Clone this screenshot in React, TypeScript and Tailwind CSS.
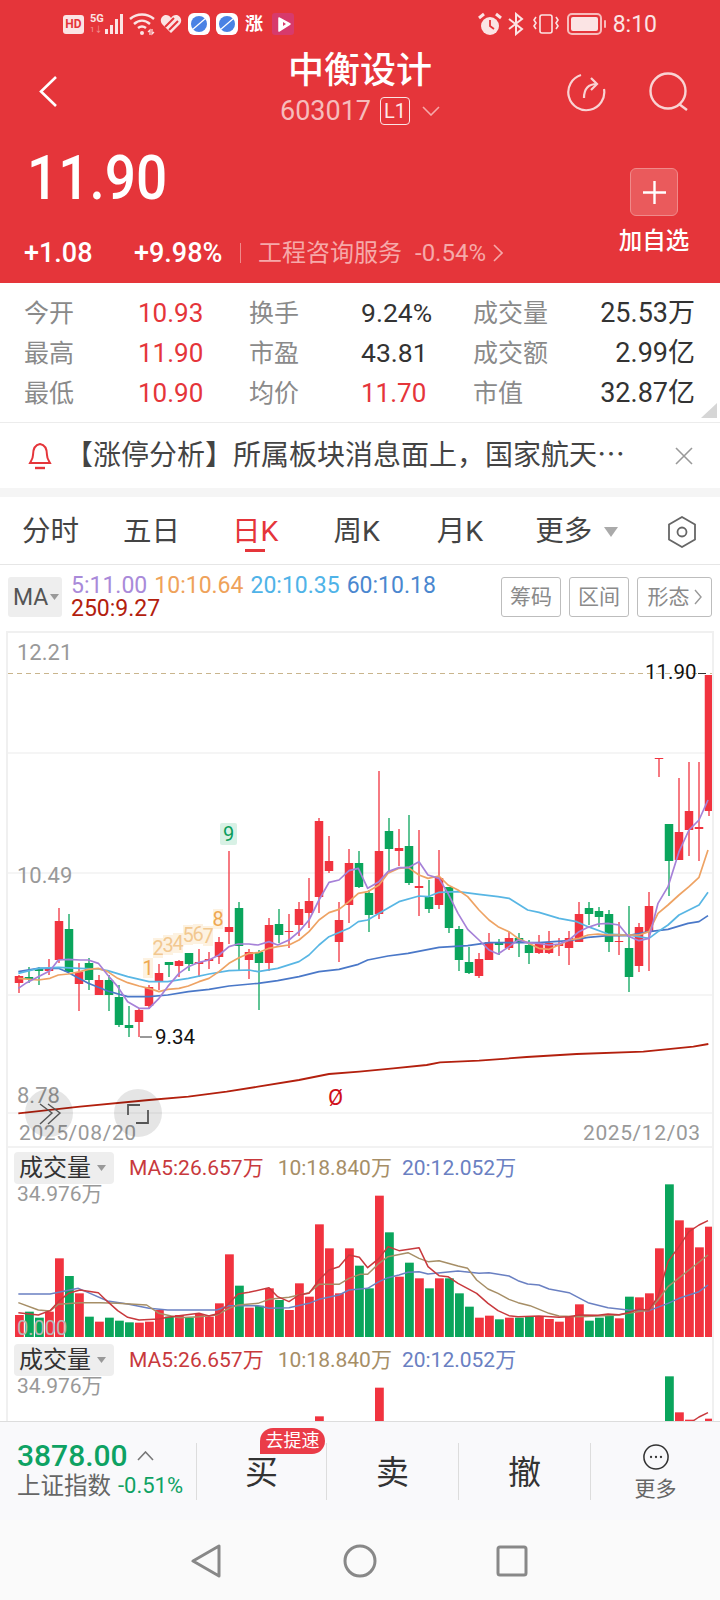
const UP = "#f1333f";
const DOWN = "#0aa55c";

type Pt = [number, number];

// [up, high, low, bodyTop, bodyBottom] in page pixels, one per day, x = 19 + 10 * i
const candles: [number, number, number, number, number][] = [
  [1, 975, 993, 976, 983], [0, 967, 983, 977, 979], [0, 967, 985, 969, 971], [1, 959, 975, 969, 971],
  [1, 908, 963, 921, 960], [0, 914, 972, 929, 972], [1, 963, 1011, 972, 984], [0, 958, 990, 963, 980],
  [1, 975, 995, 980, 995], [0, 975, 1011, 980, 995], [0, 985, 1027, 997, 1025], [0, 1006, 1037, 1025, 1028],
  [1, 1008, 1037, 1010, 1022], [1, 985, 1009, 987, 1006], [1, 964, 990, 973, 982], [0, 962, 977, 962, 965],
  [1, 960, 977, 961, 966], [0, 953, 971, 953, 964], [1, 949, 977, 962, 964], [1, 952, 969, 959, 961],
  [1, 937, 964, 942, 957], [1, 851, 944, 927, 932], [0, 902, 971, 908, 946], [1, 949, 979, 952, 960],
  [0, 950, 1010, 952, 963], [1, 918, 971, 925, 963], [0, 909, 943, 924, 935], [1, 914, 948, 931, 932],
  [1, 902, 936, 909, 925], [1, 878, 928, 901, 913], [1, 818, 913, 821, 897], [1, 836, 873, 861, 871],
  [1, 902, 962, 920, 942], [1, 849, 923, 863, 905], [0, 851, 888, 863, 887], [0, 890, 932, 893, 915],
  [1, 771, 919, 851, 914], [0, 818, 872, 831, 849], [1, 829, 866, 848, 851], [0, 815, 885, 846, 883],
  [1, 830, 916, 886, 888], [0, 880, 913, 897, 909], [1, 850, 909, 878, 905], [0, 887, 933, 887, 928],
  [0, 926, 971, 929, 960], [0, 947, 974, 962, 973], [1, 953, 978, 959, 976], [1, 933, 960, 942, 960],
  [0, 939, 955, 942, 945], [1, 932, 950, 938, 948], [0, 933, 957, 938, 943], [0, 940, 964, 945, 953],
  [1, 935, 954, 943, 953], [1, 931, 954, 943, 953], [1, 938, 956, 944, 946], [1, 931, 965, 938, 948],
  [1, 902, 942, 914, 942], [0, 902, 925, 908, 914], [0, 907, 927, 911, 917], [0, 910, 952, 914, 942],
  [1, 922, 955, 941, 942], [0, 906, 992, 948, 977], [1, 923, 972, 927, 966], [1, 892, 971, 906, 932],
  [1, 758, 777, 758, 759], [0, 824, 896, 824, 861], [1, 778, 860, 832, 860], [1, 762, 856, 811, 830],
  [1, 762, 861, 827, 829], [1, 675, 816, 675, 811],
];

// volume bar tops, y page pixels = 1140 + v / 3
const volumes = [
  525, 515, 533, 515, 355, 408, 460, 530, 545, 533, 542, 547, 548, 545, 510, 530, 525, 533, 522, 530,
  490, 343, 437, 503, 497, 445, 480, 510, 430, 470, 253, 325, 460, 325, 377, 445, 167, 277, 410, 368,
  415, 445, 415, 415, 460, 500, 533, 527, 538, 533, 533, 528, 528, 537, 545, 530, 493, 542, 533, 528,
  535, 470, 472, 460, 325, 133, 241, 263, 322, 260,
];

// line points traced in two halves: x / 3 (+360 for the right half)
const line = (left: Pt[], right: Pt[], top: number) =>
  [...left.map(([x, y]) => `${x / 3},${top + y / 3}`), ...right.map(([x, y]) => `${360 + x / 3},${top + y / 3}`)].join(" ");

const ma5 = line(
  [[55, 1075], [80, 1058], [115, 1040], [150, 1022], [175, 990], [205, 988], [240, 990], [265, 990], [295, 1000], [323, 1035], [353, 1070], [383, 1115], [417, 1135], [447, 1135], [477, 1105], [503, 1070], [537, 1030], [565, 1010], [597, 997], [627, 990], [657, 975], [687, 950], [714, 942], [747, 942], [774, 945], [807, 935], [833, 945], [867, 930], [897, 905], [927, 870], [957, 810], [987, 757], [1017, 750], [1047, 722], [1075, 715]],
  [[23, 775], [57, 755], [84, 725], [117, 713], [144, 713], [177, 695], [204, 735], [237, 745], [264, 790], [294, 850], [323, 898], [357, 930], [387, 960], [414, 972], [447, 950], [474, 930], [503, 938], [537, 940], [567, 945], [597, 942], [627, 930], [657, 905], [684, 892], [714, 882], [744, 880], [777, 885], [804, 918], [837, 932], [867, 925], [894, 820], [924, 770], [957, 665], [987, 600], [1017, 570], [1044, 510]],
  630
);
const ma10 = line(
  [[55, 1045], [115, 1050], [150, 1045], [175, 1035], [205, 1032], [240, 1025], [265, 1018], [295, 1015], [323, 1025], [353, 1045], [383, 1058], [417, 1068], [447, 1075], [477, 1085], [503, 1078], [537, 1075], [565, 1068], [597, 1055], [627, 1045], [657, 1025], [687, 1000], [714, 985], [747, 970], [774, 968], [807, 955], [833, 950], [867, 945], [897, 930], [927, 905], [957, 870], [987, 848], [1017, 838], [1047, 815], [1075, 790]],
  [[23, 785], [57, 765], [84, 730], [117, 715], [144, 712], [177, 735], [204, 745], [237, 738], [264, 765], [294, 780], [323, 800], [357, 840], [387, 870], [414, 890], [447, 905], [474, 925], [503, 938], [537, 955], [567, 958], [597, 945], [627, 930], [657, 925], [684, 915], [714, 912], [744, 915], [777, 915], [804, 915], [837, 915], [867, 905], [894, 850], [924, 825], [957, 795], [987, 770], [1017, 742], [1044, 660]],
  630
);
const ma20 = line(
  [[55, 1030], [115, 1015], [175, 1012], [240, 1015], [295, 1017], [323, 1022], [383, 1040], [447, 1055], [503, 1055], [565, 1045], [627, 1032], [687, 1022], [747, 1020], [774, 1025], [833, 1015], [897, 995], [927, 975], [957, 945], [987, 920], [1047, 895], [1075, 875]],
  [[23, 870], [57, 850], [117, 815], [177, 798], [204, 800], [237, 787], [294, 785], [357, 793], [414, 800], [447, 805], [503, 840], [537, 847], [597, 865], [650, 875], [684, 890], [744, 912], [804, 915], [867, 925], [894, 905], [924, 885], [957, 855], [1017, 825], [1044, 787]],
  630
);
const ma60 = line(
  [[55, 1025], [115, 1015], [175, 1015], [200, 1025], [265, 1060], [323, 1083], [383, 1100], [447, 1100], [503, 1095], [565, 1085], [627, 1078], [687, 1068], [774, 1060], [833, 1052], [897, 1040], [957, 1025], [1017, 1018], [1075, 1003]],
  [[23, 990], [84, 978], [144, 970], [237, 952], [323, 947], [387, 938], [447, 938], [537, 938], [627, 932], [684, 922], [744, 917], [804, 917], [867, 905], [924, 898], [984, 880], [1017, 875], [1044, 857]],
  630
);
const ma250 = line(
  [[55, 1450], [240, 1430], [447, 1410], [565, 1400], [680, 1385], [774, 1370], [897, 1350], [987, 1332], [1078, 1325]],
  [[100, 1315], [200, 1305], [240, 1297], [357, 1292], [500, 1281], [650, 1272], [850, 1265], [1000, 1250], [1045, 1242]],
  630
);

const volMa5 = line(
  [[55, 518], [115, 525], [150, 512], [175, 485], [205, 460], [240, 450], [295, 458], [323, 485], [353, 512], [383, 532], [417, 540], [477, 537], [503, 532], [537, 527], [597, 520], [627, 528], [657, 520], [687, 490], [714, 462], [747, 457], [807, 443], [833, 470], [867, 485], [897, 465], [927, 460], [957, 420], [987, 390], [1017, 380], [1047, 345], [1078, 352]],
  [[23, 383], [57, 355], [84, 320], [117, 332], [177, 323], [204, 380], [237, 407], [264, 410], [294, 430], [350, 460], [384, 490], [414, 512], [447, 527], [474, 530], [537, 528], [597, 532], [627, 530], [657, 525], [714, 526], [744, 522], [777, 524], [804, 518], [837, 508], [867, 510], [894, 470], [924, 365], [957, 320], [987, 275], [1017, 255], [1044, 242]],
  1140
);
const volMa10 = line(
  [[55, 488], [115, 510], [150, 513], [175, 493], [240, 488], [300, 488], [353, 490], [440, 495], [477, 520], [537, 533], [597, 530], [650, 525], [687, 505], [714, 495], [774, 490], [807, 478], [867, 472], [927, 458], [957, 433], [1017, 433], [1047, 415], [1080, 403]],
  [[23, 403], [57, 370], [84, 350], [144, 338], [177, 355], [204, 365], [237, 362], [294, 378], [323, 385], [350, 420], [384, 447], [414, 460], [447, 478], [474, 488], [510, 497], [567, 520], [597, 528], [657, 530], [714, 528], [777, 525], [804, 520], [867, 510], [894, 480], [924, 440], [987, 390], [1044, 345]],
  1140
);
const volMa20 = line(
  [[55, 462], [150, 462], [235, 445], [265, 458], [323, 483], [383, 492], [447, 505], [503, 510], [650, 510], [687, 497], [774, 497], [807, 505], [867, 503], [927, 490], [957, 478], [1017, 465], [1047, 450], [1080, 447]],
  [[23, 445], [57, 425], [84, 413], [117, 405], [144, 397], [177, 395], [204, 402], [294, 393], [357, 400], [387, 398], [447, 408], [474, 422], [503, 432], [537, 435], [567, 447], [627, 458], [684, 488], [744, 503], [804, 510], [867, 512], [924, 490], [957, 475], [1017, 455], [1044, 435]],
  1140
);

const stats = [
  ["今开", "10.93", "换手", "9.24%", "成交量", "25.53万"],
  ["最高", "11.90", "市盈", "43.81", "成交额", "2.99亿"],
  ["最低", "10.90", "均价", "11.70", "市值", "32.87亿"],
];

const nineTurn: [string, number, number][] = [
  ["1", 148, 968], ["2", 158, 948], ["3", 168, 945], ["4", 178, 943], ["5", 188, 935], ["6", 198, 934], ["7", 208, 936], ["8", 218, 919],
];

function StatusBar() {
  return (
    <div className="flex h-[48px] items-center justify-between pl-[63px] pr-[63px]">
      <div className="flex items-center">
        <div className="flex h-[19px] w-[21px] items-center justify-center rounded-[3px] bg-[#fbe4e4] text-[12px] font-bold leading-none text-[#e5353a]">HD</div>
        <div className="ml-[6px] flex w-[14px] flex-col text-[#fbe4e4]">
          <span className="text-[11px] font-bold leading-[12px]">5G</span>
          <span className="text-[8px] leading-[10px] text-[#f39a9a]">1↓</span>
        </div>
        <svg width="20" height="24" viewBox="0 0 20 24" fill="#fbe4e4">
          <rect x="1" y="17" width="3" height="5" />
          <rect x="6" y="13" width="3" height="9" />
          <rect x="11" y="7" width="3" height="15" />
          <rect x="16" y="2" width="3" height="20" />
        </svg>
        <svg width="27" height="24" viewBox="0 0 27 24" fill="none" stroke="#fbe4e4" strokeWidth="2.4" className="ml-[5px]">
          <path d="M1 7 C8 1 18 1 25 7" />
          <path d="M5 12 C10 7.5 16 7.5 21 12" />
          <path d="M9 16 C11.5 14 14.5 14 17 16" />
          <circle cx="13" cy="21" r="2" fill="#fbe4e4" stroke="none" />
          <path d="M19 20 l2 -2 v5 M25 20 l-2 2 v-5" strokeWidth="1.2" />
        </svg>
        <svg width="22" height="20" viewBox="0 0 22 20" className="ml-[4px]">
          <path d="M11 19 L2 10 C-1 6 2 1 6 1 C8 1 10 2 11 4 C12 2 14 1 16 1 C20 1 23 6 20 10 Z" fill="#fbe4e4" />
          <path d="M5 13 L14 4 M9 16 L18 7" stroke="#e5353a" strokeWidth="2" />
        </svg>
        <svg width="22" height="22" viewBox="0 0 22 22" className="ml-[6px]">
          <rect width="22" height="22" rx="6" fill="#fff" />
          <circle cx="11" cy="11" r="8" fill="#4a82e4" />
          <path d="M4 17 L18 5" stroke="#fff" strokeWidth="1.2" />
        </svg>
        <svg width="22" height="22" viewBox="0 0 22 22" className="ml-[6px]">
          <rect width="22" height="22" rx="6" fill="#fff" />
          <circle cx="11" cy="11" r="8" fill="#4a82e4" />
          <path d="M4 17 L18 5" stroke="#fff" strokeWidth="1.2" />
        </svg>
        <span className="ml-[6px] w-[20px] text-center text-[18px] font-bold leading-[20px] text-white">涨</span>
        <svg width="22" height="22" viewBox="0 0 22 22" className="ml-[8px]">
          <rect width="22" height="22" rx="3" fill="#d73a6c" />
          <path d="M7 5 L18 11 L7 18 Z" fill="#fff" stroke="#fff" strokeWidth="1.5" strokeLinejoin="round" />
          <path d="M11 9 L14 11 L11 13 Z" fill="#d73a6c" />
        </svg>
      </div>
      <div className="flex items-center">
        <svg width="24" height="24" viewBox="0 0 24 24">
          <circle cx="12" cy="14" r="9" fill="#fbe4e4" />
          <path d="M12 8 V14 L16 17" stroke="#e5353a" strokeWidth="1.8" fill="none" />
          <path d="M1 6 L6 2 M23 6 L18 2" stroke="#fbe4e4" strokeWidth="3" />
        </svg>
        <svg width="18" height="24" viewBox="0 0 18 24" fill="none" stroke="#fbe4e4" strokeWidth="2" className="ml-[5px]">
          <path d="M2 7 L15 17 L9 22 V2 L15 7 L2 17" />
        </svg>
        <svg width="28" height="24" viewBox="0 0 28 24" fill="none" stroke="#fbe4e4" strokeWidth="1.6" className="ml-[7px]">
          <rect x="8" y="3" width="12" height="18" rx="2" />
          <path d="M4 5 L2 8 L4 11 L2 14 L4 17 M24 5 L26 8 L24 11 L26 14 L24 17" />
        </svg>
        <svg width="40" height="24" viewBox="0 0 40 24" className="ml-[7px]">
          <rect x="1" y="2" width="33" height="20" rx="4" fill="none" stroke="#f7bcbc" strokeWidth="2" />
          <rect x="4" y="5" width="27" height="14" rx="2" fill="#fbe4e4" />
          <rect x="37" y="8" width="2" height="8" rx="1" fill="#f7bcbc" />
        </svg>
        <span className="ml-[6px] text-[23px] leading-none text-[#fbe4e4]">8:10</span>
      </div>
    </div>
  );
}

function Header() {
  return (
    <div className="h-[283px] bg-[#e5353a]">
      <StatusBar />
      <div className="mt-[2px] grid h-[80px] grid-cols-[1fr_auto_1fr] items-center">
        <div className="mt-[3px] pl-[38px]">
          <svg width="20" height="33" viewBox="0 0 20 33" fill="none" stroke="#fff" strokeWidth="2.6">
            <path d="M18 2 L3 16.5 L18 31" />
          </svg>
        </div>
        <div className="flex flex-col items-center">
          <div className="text-[36px] font-medium leading-[42px] text-white">中衡设计</div>
          <div className="flex h-[38px] items-center">
            <span className="text-[27px] leading-none text-[#f6bcbc]">603017</span>
            <span className="ml-[9px] flex h-[28px] w-[30px] items-center justify-center rounded-[4px] border border-[#fbe4e4] text-[20px] leading-none text-[#fde9e9]">L1</span>
            <svg width="18" height="10" viewBox="0 0 18 10" fill="none" stroke="#f6a9a9" strokeWidth="1.6" className="ml-[12px]">
              <path d="M1 1 L9 9 L17 1" />
            </svg>
          </div>
        </div>
        <div className="mt-[3px] flex items-center justify-end gap-[43px] pr-[31px]">
          <svg width="40" height="40" viewBox="0 0 40 40" fill="none" stroke="#f9d3d3" strokeWidth="2.2">
            <path d="M15 3 A18 18 0 1 0 38 17" />
            <path d="M18 26 C18 17 22 12 31 12" />
            <path d="M25 6 L31 12 L25 18" />
          </svg>
          <svg width="40" height="40" viewBox="0 0 40 40" fill="none" stroke="#f9d3d3" strokeWidth="2.4">
            <circle cx="19" cy="19" r="17.5" />
            <path d="M30 32 L38 38" />
          </svg>
        </div>
      </div>
      <div className="mt-[18px] flex items-start justify-between">
        <div>
          <div className="origin-center scale-y-110 pl-[27px] text-[55px] font-medium leading-[60px] text-white">11.90</div>
          <div className="mt-[30px] flex h-[30px] items-center pl-[24px]">
            <span className="w-[110px] text-[27px] font-medium leading-none text-white">+1.08</span>
            <span className="w-[106px] text-[27px] font-medium leading-none text-white">+9.98%</span>
            <span className="h-[20px] w-px bg-[#f08a8a]" />
            <span className="ml-[17px] text-[24px] leading-none text-[#f6a9a9]">工程咨询服务</span>
            <span className="ml-[13px] text-[24px] leading-none text-[#f6a9a9]">-0.54%</span>
            <svg width="10" height="18" viewBox="0 0 10 18" fill="none" stroke="#f6a9a9" strokeWidth="1.6" className="ml-[7px]">
              <path d="M1 1 L9 9 L1 17" />
            </svg>
          </div>
        </div>
        <div className="mt-[20px] flex w-[102px] flex-col items-center pr-[30px]">
          <div className="flex h-[48px] w-[48px] items-center justify-center rounded-[6px] border border-[#f08a8a] bg-[#ea5a5c]">
            <svg width="25" height="25" viewBox="0 0 25 25" stroke="#fff" strokeWidth="2.4">
              <path d="M12.5 1 V24 M1 12.5 H24" />
            </svg>
          </div>
          <div className="mt-[13px] whitespace-nowrap text-[23.5px] font-medium leading-[24px] text-white">加自选</div>
        </div>
      </div>
    </div>
  );
}

function Stats() {
  return (
    <div className="relative h-[140px] border-b border-[#ececec] bg-white pl-[24px] pr-[25px] pt-[10px]">
      {stats.map((row, r) => (
        <div key={r} className="grid h-[40px] grid-cols-[115px_110px_112px_112px_96px_1fr] items-center text-[25px] leading-none">
          <span className="text-[#8a8a8a]">{row[0]}</span>
          <span className="-ml-[1px] text-[26px] text-[#e5353a]">{row[1]}</span>
          <span className="text-[#8a8a8a]">{row[2]}</span>
          <span className={r === 2 ? "text-[26px] text-[#e5353a]" : "text-[26.5px] text-[#333]"}>{row[3]}</span>
          <span className="whitespace-nowrap text-[#8a8a8a]">{row[4]}</span>
          <span className="text-right text-[27px] text-[#333]">{row[5]}</span>
        </div>
      ))}
      <svg width="16" height="15" viewBox="0 0 16 15" className="absolute bottom-[4px] right-[3px]">
        <path d="M16 0 V15 H0 Z" fill="#d6d6d6" />
      </svg>
    </div>
  );
}

function Notice() {
  return (
    <div className="flex h-[65px] items-center bg-white pl-[28px]">
      <svg width="24" height="28" viewBox="0 0 24 28" fill="none" stroke="#e5353a" strokeWidth="2">
        <path d="M12 2 C6 3 5 8 5 13 C5 17 3 19 2 21 H22 C21 19 19 17 19 13 C19 8 18 3 12 2 Z" />
        <path d="M7 26 H17" strokeWidth="2.4" />
      </svg>
      <span className="ml-[13px] w-[560px] whitespace-nowrap text-[28px] leading-[34px] text-[#444]">【涨停分析】所属板块消息面上，国家航天⋯</span>
      <svg width="18" height="18" viewBox="0 0 18 18" stroke="#999" strokeWidth="1.6" className="ml-[50px]">
        <path d="M1 1 L17 17 M17 1 L1 17" />
      </svg>
    </div>
  );
}

function Tabs() {
  return (
    <div className="relative flex h-[68px] items-center border-b border-[#e6e6e6] bg-white pl-[22px] pt-[3px] text-[28.5px] leading-none text-[#444]">
      <span>分时</span>
      <span className="ml-[44px]">五日</span>
      <span className="relative ml-[52px] text-[#e5353a]">
        日K
        <span className="absolute left-[13px] top-[31px] h-[3px] w-[20px] bg-[#e5353a]" />
      </span>
      <span className="ml-[55px]">周K</span>
      <span className="ml-[57px]">月K</span>
      <span className="ml-[52px]">更多</span>
      <svg width="14" height="10" viewBox="0 0 14 10" fill="#aaa" className="ml-[12px]">
        <path d="M0 0 H14 L7 10 Z" />
      </svg>
      <svg width="30" height="32" viewBox="0 0 30 32" fill="none" stroke="#666" strokeWidth="1.8" className="ml-[49px]">
        <path d="M15 1 L28 8.5 V23.5 L15 31 L2 23.5 V8.5 Z" />
        <circle cx="15" cy="16" r="4.5" />
      </svg>
    </div>
  );
}

function MaRow() {
  return (
    <div className="flex h-[66px] items-center bg-white pb-[2px] pl-[8px] pr-[8px]">
      <div className="flex h-[40px] w-[54px] items-center rounded-[3px] bg-[#eeeeee] pl-[5px] text-[23px] leading-none text-[#555]">
        MA
        <svg width="9" height="6" viewBox="0 0 9 6" fill="#999" className="ml-[2px]">
          <path d="M0 0 H9 L4.5 6 Z" />
        </svg>
      </div>
      <div className="ml-[9px] w-[430px] text-[23px] leading-[23px]">
        <div className="flex gap-[7px]">
          <span className="text-[#a98ad9]">5:11.00</span>
          <span className="text-[#efa25a]">10:10.64</span>
          <span className="text-[#4fb3e8]">20:10.35</span>
          <span className="text-[#4a87cf]">60:10.18</span>
        </div>
        <div className="text-[#b3200e]">250:9.27</div>
      </div>
      <div className="flex gap-[8px] text-[21px] leading-none text-[#8a8a8a]">
        <span className="flex h-[40px] w-[60px] items-center justify-center rounded-[3px] border border-[#bdbdbd]">筹码</span>
        <span className="flex h-[40px] w-[60px] items-center justify-center rounded-[3px] border border-[#bdbdbd]">区间</span>
        <span className="flex h-[40px] w-[75px] items-center justify-center rounded-[3px] border border-[#bdbdbd]">
          形态
          <svg width="8" height="16" viewBox="0 0 8 16" fill="none" stroke="#999" strokeWidth="1.4" className="ml-[4px]">
            <path d="M1 1 L7 8 L1 15" />
          </svg>
        </span>
      </div>
    </div>
  );
}

// viewBox keeps page coordinates so the traced numbers stay readable
function KChart() {
  return (
    <svg viewBox="8 633 704 515" width="704" height="515" className="block">
      {[753, 873, 995, 1113].map((y) => (
        <line key={y} x1="8" x2="712" y1={y} y2={y} stroke="#f2f2f2" strokeWidth="1.5" />
      ))}
      <line x1="8" x2="712" y1="1147" y2="1147" stroke="#eeeeee" strokeWidth="1.5" />
      <line x1="8" x2="712" y1="673.5" y2="673.5" stroke="#c9b58d" strokeWidth="1.2" strokeDasharray="5 4" />

      <g fontSize="22" fill="#999">
        <text x="17" y="660">12.21</text>
        <text x="17" y="883">10.49</text>
        <text x="17" y="1103">8.78</text>
      </g>
      <g fontSize="21" fill="#999" letterSpacing="0.6">
        <text x="19" y="1140">2025/08/20</text>
        <text x="583" y="1140">2025/12/03</text>
      </g>

      {candles.map(([up, high, low, top, bottom], i) => {
        const x = 19 + 10 * i;
        const color = up ? UP : DOWN;
        return (
          <g key={i} fill={color}>
            <rect x={x - 0.65} y={high} width="1.3" height={low - high} />
            <rect x={x - 4.25} y={top} width="8.5" height={bottom - top} />
          </g>
        );
      })}

      <g fill="none" strokeWidth="1.7" strokeLinejoin="round">
        <polyline points={ma250} stroke="#b3200e" strokeWidth="1.8" />
        <polyline points={ma60} stroke="#4a78c8" />
        <polyline points={ma20} stroke="#58b6e4" />
        <polyline points={ma10} stroke="#eea364" />
        <polyline points={ma5} stroke="#a681d8" />
      </g>

      {nineTurn.map(([n, x, y]) => (
        <g key={n}>
          <rect x={x - 5} y={y - 10} width="10" height="20" fill="#fdf2e1" />
          <text x={x} y={y + 7} fontSize="20" textAnchor="middle" fill={n === "1" || n === "8" ? "#efa850" : "#f2c890"}>{n}</text>
        </g>
      ))}
      <rect x="220" y="823" width="17" height="22" rx="2" fill="#d8f1e5" />
      <text x="228.5" y="841" fontSize="20" textAnchor="middle" fill="#0a9d5c">9</text>

      <path d="M140 1037 H152" stroke="#333" strokeWidth="1" />
      <text x="155" y="1044" fontSize="20.5" fill="#111">9.34</text>
      <text x="645" y="679" fontSize="20.5" fill="#111">11.90</text>
      <path d="M698 673.5 H706" stroke="#333" strokeWidth="1" />
      <text x="328" y="1105" fontSize="22" fill="#d0101a">Ø</text>

      <circle cx="49" cy="1113" r="24" fill="#000" opacity="0.1" />
      <path d="M40 1104 L52 1113 L40 1124 M48 1104 L60 1113 L48 1124" fill="none" stroke="#555" strokeWidth="1.4" />
      <circle cx="138" cy="1113" r="24" fill="#000" opacity="0.1" />
      <path d="M128 1115 V1105 H140 M148 1110 V1123 H136" fill="none" stroke="#555" strokeWidth="1.8" />
    </svg>
  );
}

function VolumePanel() {
  return (
    <div className="h-[192px] bg-white">
      <div className="flex h-[36px] items-center pl-[6px] pt-[4px]">
        <div className="flex h-[32px] w-[100px] items-center rounded-[4px] bg-[#eeeeee] pl-[5px] text-[24px] leading-[30px] text-[#333]">
          <span className="whitespace-nowrap">成交量</span>
          <svg width="9" height="6" viewBox="0 0 9 6" fill="#999" className="ml-[6px]">
            <path d="M0 0 H9 L4.5 6 Z" />
          </svg>
        </div>
        <span className="ml-[15px] text-[21px] leading-none text-[#c8393d]">MA5:26.657万</span>
        <span className="ml-[14px] text-[21px] leading-none text-[#a68e66]">10:18.840万</span>
        <span className="ml-[10px] text-[21px] leading-none text-[#6a80c2]">20:12.052万</span>
      </div>
      <svg viewBox="8 1184 704 156" width="704" height="156" className="block">
        {volumes.map((v, i) => {
          const y = 1140 + v / 3;
          return <rect key={i} x={15 + 10 * i} y={y} width="8.8" height={1337 - y} fill={candles[i][0] ? UP : DOWN} />;
        })}
        <g fill="none" strokeWidth="1.5" strokeLinejoin="round">
          <polyline points={volMa20} stroke="#6a80c2" />
          <polyline points={volMa10} stroke="#a68e66" />
          <polyline points={volMa5} stroke="#c8393d" />
        </g>
        <text x="17" y="1201" fontSize="21" fill="#999">34.976万</text>
        <text x="17" y="1335" fontSize="20" fill="#b8b8b8">0.000</text>
      </svg>
    </div>
  );
}

function Footer() {
  return (
    <div className="flex h-[99px] items-center border-t border-[#dddddd] bg-[#f9f9fb]">
      <div className="h-[60px] w-[196px] pl-[17px]">
        <div className="flex h-[30px] items-center text-[30px] font-medium leading-none text-[#0ea263]">
          3878.00
          <svg width="17" height="10" viewBox="0 0 17 10" fill="none" stroke="#777" strokeWidth="1.6" className="ml-[9px]">
            <path d="M1 9 L8.5 1 L16 9" />
          </svg>
        </div>
        <div className="flex h-[30px] items-center">
          <span className="text-[23.5px] leading-[30px] text-[#666]">上证指数</span>
          <span className="ml-[7px] text-[22px] leading-[30px] text-[#0ea263]">-0.51%</span>
        </div>
      </div>
      <div className="relative flex h-[57px] w-[130px] items-center justify-center border-l border-[#dddddd] pt-[3px] text-[33px] leading-none text-[#333]">
        买
        <span className="absolute left-[63px] top-[-15px] flex h-[26px] w-[65px] items-center justify-center rounded-t-[13px] rounded-br-[13px] bg-[#ea3c48] text-[18px] leading-none text-white">去提速</span>
      </div>
      <div className="flex h-[57px] w-[132px] items-center justify-center border-l border-[#dddddd] pt-[3px] text-[33px] leading-none text-[#333]">卖</div>
      <div className="flex h-[57px] w-[132px] items-center justify-center border-l border-[#dddddd] pt-[3px] text-[33px] leading-none text-[#333]">撤</div>
      <div className="flex h-[57px] w-[130px] flex-col items-center border-l border-[#dddddd]">
        <svg width="34" height="34" viewBox="0 0 34 34" className="mt-[1px]">
          <circle cx="17" cy="17" r="15.8" fill="none" stroke="#333" strokeWidth="2" />
          <circle cx="10.5" cy="17" r="1.5" fill="#333" />
          <circle cx="17" cy="17" r="1.5" fill="#333" />
          <circle cx="23.5" cy="17" r="1.5" fill="#333" />
        </svg>
        <span className="mt-[9px] text-[21px] leading-none text-[#666]">更多</span>
      </div>
    </div>
  );
}

function NavBar() {
  return (
    <div className="flex h-[80px] items-start bg-[#fafafa] pl-[191px] pt-[24px]">
      <svg width="30" height="34" viewBox="0 0 30 34" fill="none" stroke="#888" strokeWidth="3" strokeLinejoin="round">
        <path d="M28 2 V32 L2 17 Z" />
      </svg>
      <svg width="34" height="34" viewBox="0 0 34 34" fill="none" stroke="#888" strokeWidth="3" className="ml-[122px]">
        <circle cx="17" cy="17" r="15" />
      </svg>
      <svg width="32" height="32" viewBox="0 0 32 32" fill="none" stroke="#888" strokeWidth="3" strokeLinejoin="round" className="ml-[119px] mt-[1px]">
        <rect x="2" y="2" width="28" height="28" rx="2" />
      </svg>
    </div>
  );
}

export default function App() {
  return (
    <div className="h-[1600px] w-[720px] overflow-hidden bg-white font-['Roboto','Noto_Sans_CJK_SC',sans-serif]">
      <Header />
      <Stats />
      <Notice />
      <div className="h-[9px] bg-[#f5f5f5]" />
      <Tabs />
      <MaRow />
      <div className="mx-[6px] h-[790px] overflow-hidden border-x-2 border-t-2 border-[#f0f0f0]">
        <KChart />
        <VolumePanel />
        <VolumePanel />
      </div>
      <Footer />
      <NavBar />
    </div>
  );
}
